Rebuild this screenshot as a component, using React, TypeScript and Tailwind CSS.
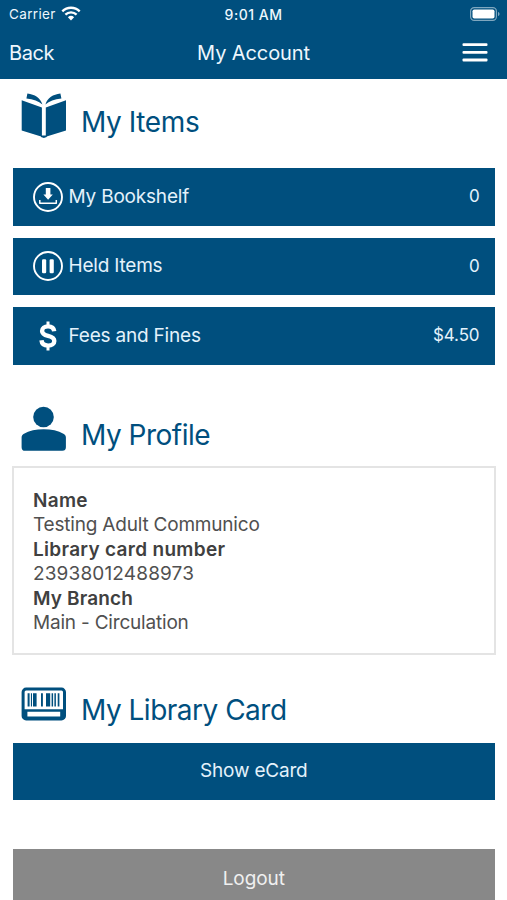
import type { ReactNode } from "react";

function BookIcon() {
  return (
    <svg width="46" height="46" viewBox="0 0 46 46" fill="#004f7e">
      <path d="M.7 7.200L20.900 14.500v29.200L.7 37.400zM24.800 14.500L45 7.200v30.200l-20.200 6.300z" />
      <path d="M20 42.500h5.700v1.500L22.900 45l-2.900-1z" />
      <path d="M6.400.6c7.400.8 12.800 4.400 15 10.800C17.500 8.200 12.500 6.200 5.400 5.500zM39.400.6c-7.400.8-12.800 4.400-15 10.800 3.900-3.200 8.900-5.200 16-5.900z" />
    </svg>
  );
}

function PersonIcon() {
  return (
    <svg width="46" height="46" viewBox="0 0 46 46" fill="#004f7e">
      <circle cx="22.500" cy="11" r="10.300" />
      <path d="M.6 31.500c0-1.500.6-2.800 1.900-3.600C8.400 24.500 15 23.200 22.700 23.200s14.300 1.300 20.200 4.700c1.300.8 2 2.100 2 3.600v9.700a3.600 3.600 0 0 1-3.600 3.600h-37A3.600 3.600 0 0 1 .6 41.200z" />
    </svg>
  );
}

function BarcodeIcon() {
  return (
    <svg width="46" height="34" viewBox="0 0 46 34">
      <rect x="2.100" y="2.100" width="41.400" height="29.800" rx="3" fill="#fff" stroke="#004f7e" strokeWidth="3" />
      <path fill="#004f7e" d="M6.600 6.200h2v13.400h-2zM9.900 6.200h1.100v13.400H9.900zM12 6.200h3.600v13.400H12zM20 6.200h1.900v13.400H20zM25 6.200h4.200v13.400H25zM30.600 6.200h1.500v13.400h-1.500zM33.400 6.200h1.500v13.400h-1.500zM36.700 6.200h1.700v13.400h-1.700z" />
      <path fill="#004f7e" fillRule="evenodd" d="M2 22.300h41.500V32H2zM6.400 24.800v4.600h32.800v-4.600z" />
    </svg>
  );
}

function DownloadIcon() {
  return (
    <svg width="32" height="32" viewBox="0 0 32 32" fill="none" stroke="#fff">
      <circle cx="16" cy="16" r="14" strokeWidth="1.900" />
      <path d="M7.800 18.900v3.300h16.500v-3.300" strokeWidth="1.500" strokeLinejoin="round" />
      <path d="M13.800 7h4.600v6.500h2.400L16.100 18.800l-4.700-5.300h2.400z" fill="#fff" stroke="none" />
    </svg>
  );
}

function PauseIcon() {
  return (
    <svg width="32" height="32" viewBox="0 0 32 32" fill="none" stroke="#fff">
      <circle cx="16" cy="16" r="14" strokeWidth="1.900" />
      <rect x="10" y="9.200" width="4.200" height="14" rx="1.200" fill="#fff" stroke="none" />
      <rect x="17.600" y="9.200" width="4.200" height="14" rx="1.200" fill="#fff" stroke="none" />
    </svg>
  );
}

function DollarIcon() {
  return (
    <svg width="32" height="32" viewBox="0 0 32 32" fill="none" stroke="#fff">
      <path d="M16 1.600v5M16 25.400v5" strokeWidth="3" />
      <path d="M22.200 11.300c-.3-3.200-2.600-4.900-6.200-4.900-3.600 0-5.900 1.800-5.900 4.600 0 3.200 2.700 4.100 6 4.900 3.500.9 6.200 1.900 6.200 5 0 2.900-2.400 4.700-6.200 4.700s-6.300-1.900-6.600-5.300" strokeWidth="4.400" />
    </svg>
  );
}

function Heading({ icon, children, className }: { icon: ReactNode; children: ReactNode; className: string }) {
  return (
    <div className={`flex items-start pl-[21px] text-[#004f7e] ${className}`}>
      <div className="w-[60px] shrink-0">{icon}</div>
      {children}
    </div>
  );
}

function Row({ icon, label, value }: { icon: ReactNode; label: string; value: string }) {
  return (
    <div className="flex h-[57.500px] items-center bg-[#004f7e] pr-[15px] pl-[19px] text-[#e4f2fb]">
      <span className="mr-[4.500px] w-[32px]">{icon}</span>
      <span className="flex-1 text-[19px] tracking-[-0.200px]">{label}</span>
      <span className="text-[17px] tracking-[-0.100px]">{value}</span>
    </div>
  );
}

export default function App() {
  return (
    <div className="h-[900px] w-[507px] overflow-hidden bg-white font-['Inter',sans-serif] whitespace-nowrap">
      <header className="h-[79px] bg-[#004f7e] text-[#eef7fd]">
        <div className="grid h-[27px] grid-cols-3 items-center px-[8px] text-[13.500px]">
          <div className="flex items-center gap-[5px] pl-px">
            <span className="pt-px tracking-[0.350px]">Carrier</span>
            <svg width="20" height="15" viewBox="0 0 20 15" fill="none" stroke="#fff" strokeWidth="2.400">
              <path d="M1.300 5.300a12.600 12.600 0 0 1 17.400 0M4.400 8.600a8.200 8.200 0 0 1 11.200 0" />
              <path d="M10 14.400l-3.100-3.200a4.500 4.500 0 0 1 6.200 0z" fill="#fff" stroke="none" />
            </svg>
          </div>
          <div className="pt-px text-center text-[14px] font-medium tracking-[0.500px]">9:01 AM</div>
          <svg className="-mr-px justify-self-end" width="30" height="14" viewBox="0 0 30 14">
            <rect x=".6" y=".6" width="25.800" height="12.800" rx="3.600" fill="none" stroke="#7fa7bf" strokeWidth="1.200" />
            <rect x="2.500" y="2.500" width="22" height="9" rx="1.800" fill="#fff" />
            <path d="M28 5c2 .6 2 3.400 0 4z" fill="#7fa7bf" />
          </svg>
        </div>
        <div className="grid h-[51px] grid-cols-3 items-center px-[9px] text-[20px]">
          <span className="tracking-[-0.400px]">Back</span>
          <span className="text-center tracking-[-0.100px]">My Account</span>
          <svg className="mr-[10px] justify-self-end" width="26" height="19" viewBox="0 0 26 19" fill="#fff">
            <rect x=".5" y=".2" width="25" height="2.800" rx="1" />
            <rect x=".5" y="8" width="25" height="2.800" rx="1" />
            <rect x=".5" y="15.600" width="25" height="2.800" rx="1" />
          </svg>
        </div>
      </header>

      <main className="text-[19px]">
        <Heading icon={<BookIcon />} className="h-[89px] pt-[14px]">
          <h2 className="pt-[11px] text-[28px] leading-[36px] tracking-[-0.400px]">My Items</h2>
        </Heading>
        <div className="mr-[12.500px] ml-[13px] flex flex-col gap-[12px]">
          <Row icon={<DownloadIcon />} label="My Bookshelf" value="0" />
          <Row icon={<PauseIcon />} label="Held Items" value="0" />
          <Row icon={<DollarIcon />} label="Fees and Fines" value="$4.50" />
        </div>

        <Heading icon={<PersonIcon />} className="h-[101.500px] pt-[41.500px]">
          <h2 className="pt-[10.500px] text-[28px] leading-[36px] tracking-[-0.500px]">My Profile</h2>
        </Heading>
        <dl className="mr-[11px] ml-[12px] h-[189px] border-2 border-[#e4e4e4] pt-[20.500px] pl-[19px] text-[19px] leading-[24.500px] tracking-[-0.200px] text-[#505050]">
          <dt className="font-semibold tracking-[0.300px] text-[#404040]">Name</dt>
          <dd>Testing Adult Communico</dd>
          <dt className="font-semibold tracking-[0.300px] text-[#404040]">Library card number</dt>
          <dd className="tracking-[0.150px]">23938012488973</dd>
          <dt className="font-semibold tracking-[0.150px] text-[#404040]">My Branch</dt>
          <dd>Main - Circulation</dd>
        </dl>

        <Heading icon={<BarcodeIcon />} className="h-[87.500px] pt-[32px]">
          <h2 className="pt-[5px] text-[28px] leading-[36px] tracking-[-0.500px]">My Library Card</h2>
        </Heading>
        <button className="mx-[13px] flex h-[57.500px] w-[481.500px] items-center justify-center bg-[#004f7e] pb-px text-[19px] tracking-[-0.200px] text-[#e4f2fb]">
          Show eCard
        </button>
        <button className="mx-[13px] mt-[48.500px] flex h-[57.500px] w-[481.500px] items-center justify-center bg-[#888888] pt-[3px] text-[19px] tracking-[-0.100px] text-[#f0f0f0]">
          Logout
        </button>
      </main>
    </div>
  );
}
